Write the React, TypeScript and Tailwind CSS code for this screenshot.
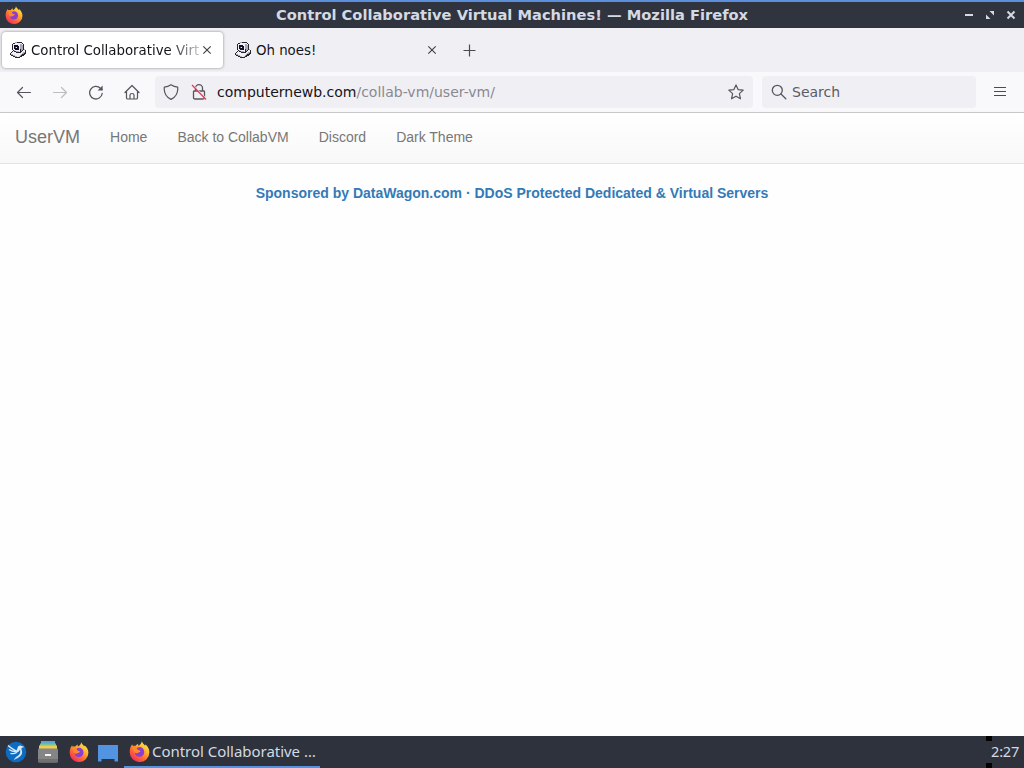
import React from 'react';

function FirefoxIcon({ id, size }: { id: string; size: number }) {
  return (
    <svg width={size} height={size} viewBox="0 0 20 20" className="shrink-0">
      <defs>
        <linearGradient id={id} x1="0.85" y1="0.05" x2="0.2" y2="0.95">
          <stop offset="0" stopColor="#fff04a" />
          <stop offset="0.35" stopColor="#ffb02e" />
          <stop offset="0.65" stopColor="#ff6a33" />
          <stop offset="1" stopColor="#ee2c5e" />
        </linearGradient>
      </defs>
      <path
        d="M12.2 0.3c.5 2 2.2 2.8 3.2 4.3.2-.5.1-1 0-1.4 2.4 1.5 4 4.600 4 7.500a9.300 9.200 0 0 1-18.700.2C.5 8 1.500 5 3.100 3.200c.1.700.3 1.100.7 1.600.8-.3 1.600-.4 2.500-.2C7 3.600 7.900 2.900 8.900 2.500c-.4.8-.4 1.500.1 2.100C10.500 3.700 12 2.500 12.200.3z"
        fill={`url(#${id})`}
      />
      <path d="M8 6.300c2.500-1.600 6.300.2 6.500 3.900.1 3-2.200 5-4.800 4.900-2.600-.1-4.300-2-4.200-4.300 1 .9 2.400.8 3.300.1.800-.6 1.500-.7 2-.9.100-.7-1.900-1-2.900-1.600-.5-.5-.5-1.400.1-2.100z" fill="#8a3fd0" />
      <path d="M3.600 5.200c1.700-.7 3.400-.3 4.300 1.100-.5.700-.3 1.700.4 2.200 1 .5 2.800.8 2.600 1.500-1 .2-1.400.5-2.200 1.100-1.300.9-3 .4-4-.900z" fill="#ff8a2b" />
    </svg>
  );
}

// Pixel art favicon, one character per pixel
const PIXELS = [
  '.....ggkkkkk....',
  '...kkwwwwwwwk...',
  '..kwwwwwwwggwk..',
  '..kwnnnnwwgggk..',
  '..kwnnnnnwgggk..',
  '..kwnbwnnwgggk..',
  '..kwnnnnnwgggk..',
  '..kwwnnnnwkggkg.',
  '...kgwwwwwkgkwwk',
  '..kwkkgggwkkwwwk',
  '.kwwwwkkkkkwwggk',
  'kwwwwwwwwwwwggkk',
  'kggwwwwwwwwgkkk.',
  '.kkggwwwwwgkkk..',
  '...kkggwwgkk....',
  '.....kkkkk......',
];

const PIXEL_COLORS: Record<string, string> = {
  k: '#24242e',
  w: '#f1f1f4',
  g: '#a9a9b4',
  n: '#10102c',
  b: '#5c5e88',
};

function ComputerIcon() {
  return (
    <svg width="16" height="16" viewBox="0 0 16 16" shapeRendering="crispEdges" className="shrink-0">
      {PIXELS.map((row, y) =>
        row.split('').map((c, x) =>
          c === '.' ? null : <rect key={`${x}-${y}`} x={x} y={y} width="1" height="1" fill={PIXEL_COLORS[c]} />
        )
      )}
    </svg>
  );
}

function CloseIcon() {
  return (
    <svg width="10" height="10" viewBox="0 0 10 10" fill="none" stroke="#3e3e45" strokeWidth="1.100" className="shrink-0">
      <path d="M1.300 1.300l7.400 7.400M8.700 1.300l-7.400 7.400" />
    </svg>
  );
}

function TitleBar() {
  return (
    <div className="flex h-7 items-center border-t-2 border-[#5b8fdc] bg-[#2f343f] pl-[5px] pr-2">
      <div className="w-[90px]">
        <FirefoxIcon id="fx-title" size={18} />
      </div>
      <div className="flex-1 whitespace-nowrap pb-px pl-[3px] text-center font-['DejaVu_Sans',sans-serif] text-[14.670px] leading-5 font-bold text-[#d3dae3]">
        Control Collaborative Virtual Machines! — Mozilla Firefox
      </div>
      <div className="flex w-[90px] items-center justify-end">
        <svg width="54" height="12" viewBox="0 0 54 12" fill="#d3dae3">
          <path d="M3 5h8v2H3z" />
          <path d="M27.500 2H32v4.500zM24 5.500L28.500 10H24z" />
          <path d="M45.500 2.500l7 7M52.500 2.500l-7 7" stroke="#d3dae3" strokeWidth="2" />
        </svg>
      </div>
    </div>
  );
}

function TabBar() {
  return (
    <div className="flex h-11 items-center bg-[#f0f0f4] pl-0.5 font-['DejaVu_Sans',sans-serif] text-[13.330px] text-[#15141a]">
      <div className="flex h-9 w-[221px] items-center rounded bg-white pl-2 pr-[11px] shadow-[0_0_3px_rgba(60,60,70,0.6)]">
        <ComputerIcon />
        <span className="ml-[5px] w-[169px] whitespace-nowrap pt-[2px] [mask-image:linear-gradient(to_right,black_138px,transparent_178px)]">
          Control Collaborative Virt
        </span>
        <span className="ml-[2px] flex">
          <CloseIcon />
        </span>
      </div>
      <div className="flex h-9 w-[225px] items-center pl-3 pr-[7px]">
        <ComputerIcon />
        <span className="ml-[5px] flex-1 pt-[2px]">Oh noes!</span>
        <span className="mr-[4px] flex">
          <CloseIcon />
        </span>
      </div>
      <svg width="14" height="14" viewBox="0 0 14 14" fill="none" stroke="#4a4a52" strokeWidth="1.200" className="ml-[14px]">
        <path d="M7.500 1.500v12M1.500 7.500h12" />
      </svg>
    </div>
  );
}

function Toolbar() {
  return (
    <div className="flex h-[41px] items-center border-b border-[#cccccf] bg-[#f9f9fb] font-['DejaVu_Sans',sans-serif] text-[14px]">
      <div className="flex w-[155px] items-center gap-5 pl-4">
        <svg width="16" height="16" viewBox="0 0 16 16" fill="none" stroke="#55555d" strokeWidth="1.200" strokeLinecap="round" strokeLinejoin="round">
          <path d="M14.500 8.500H1.500M6.500 3.500l-5 5 5 5" />
        </svg>
        <svg width="16" height="16" viewBox="0 0 16 16" fill="none" stroke="#bcbcc2" strokeWidth="1.200" strokeLinecap="round" strokeLinejoin="round">
          <path d="M1.500 8.500h13M9.500 3.500l5 5-5 5" />
        </svg>
        <svg width="16" height="16" viewBox="0 0 16 16" fill="none" stroke="#55555d" strokeWidth="1.300" strokeLinecap="round">
          <path d="M14.200 9.500A6.300 6.300 0 1 1 12.400 4.200L14 5.500" />
          <path d="M14.600 1.600v5H9.600z" fill="#55555d" stroke="none" />
        </svg>
        <svg width="16" height="16" viewBox="0 0 16 16" fill="none" stroke="#55555d" strokeWidth="1.200" strokeLinecap="round" strokeLinejoin="round">
          <path d="M1 8.500l7-7 7 7M2.500 7.500v6.200q0 1.300 1.300 1.300h8.400q1.300 0 1.300-1.300V7.500M6 15v-4q0-1.500 2-1.500t2 1.500v4" />
        </svg>
      </div>
      <div className="flex h-8 w-[598px] items-center rounded bg-[#f0f0f4] pl-2 pr-[9px]">
        <svg width="16" height="16" viewBox="0 0 16 16" fill="none" stroke="#55555d" strokeWidth="1.200" strokeLinejoin="round">
          <path d="M8 .8Q11 2.800 14.700 3.100C15.200 8.500 12.800 13 8 15.400 3.200 13 .8 8.500 1.300 3.100 5 2.800 8 .8 8 .8z" />
        </svg>
        <svg width="16" height="16" viewBox="0 0 16 16" fill="none" stroke="#55555d" strokeWidth="1.300" className="ml-3">
          <path d="M4.500 7V4.200a3.500 3.500 0 0 1 7 0V7M3.300 7h9.400q.8 0 .8.800v5.700q0 1.500-1.500 1.500H4q-1.500 0-1.500-1.500V7.800q0-.8.800-.8z" />
          <path d="M1.800 .8l13.500 14" stroke="#f0f0f4" strokeWidth="1.200" />
          <path d="M1 1l14 14.500" stroke="#df3b62" />
        </svg>
        <span className="ml-[10px] flex-1 whitespace-nowrap text-[#8a8991]">
          <span className="text-[#15141a]">computernewb.com</span>/collab-vm/user-vm/
        </span>
        <svg width="16" height="16" viewBox="0 0 16 16" fill="none" stroke="#55555d" strokeWidth="1.200" strokeLinejoin="round">
          <path d="M8 .9l2.100 4.700 5.100.5-3.800 3.500 1.100 5.200L8 12.200l-4.500 2.600 1.100-5.200L.8 6.100l5.100-.5z" />
        </svg>
      </div>
      <div className="ml-[9px] flex h-8 w-[214px] items-center rounded bg-[#f0f0f4] pl-[9px] text-[#5b5b66]">
        <svg width="16" height="16" viewBox="0 0 16 16" fill="none" stroke="#55555d" strokeWidth="1.300" strokeLinecap="round">
          <circle cx="6.300" cy="6.300" r="5" />
          <path d="M10 10l4.800 4.800" />
        </svg>
        <span className="ml-[5px]">Search</span>
      </div>
      <svg width="12" height="11" viewBox="0 0 12 11" fill="none" stroke="#4a4a52" strokeWidth="1.200" className="mb-px ml-[18px]">
        <path d="M0 1.500h12M0 5.500h12M0 9.500h12" />
      </svg>
    </div>
  );
}

function SiteNav() {
  return (
    <nav className="flex h-[51px] items-center border-b border-[#e2e2e2] bg-linear-to-b from-white to-[#f8f8f8] pl-[15px] pb-[2px] font-['Liberation_Sans',Arial,sans-serif] text-[14px] text-[#777777] shadow-[0_1px_4px_rgba(0,0,0,0.075)]">
      <a className="mr-[30px] text-[18px]">UserVM</a>
      <div className="flex gap-[30px]">
        <a>Home</a>
        <a>Back to CollabVM</a>
        <a>Discord</a>
        <a>Dark Theme</a>
      </div>
    </nav>
  );
}

function LubuntuIcon() {
  return (
    <svg width="22" height="22" viewBox="0 0 22 22">
      <circle cx="11" cy="11" r="10.300" fill="#0e6bc0" />
      <path d="M3 4.500q3.500 3 8 5.500" stroke="#d7eafa" strokeWidth="1.600" fill="none" />
      <path d="M4 8.500q3 2.200 7 2.300" stroke="#d7eafa" strokeWidth="1.400" fill="none" />
      <path d="M5.500 12.300q3 1 6.300-.8" stroke="#d7eafa" strokeWidth="1.300" fill="none" />
      <path d="M19.500 6l-2.600-.9c-2-1.300-4.100-.4-4.400 1.800-.2 1.600-1.200 2.500-2.200 3.300l1.200 1.600c1.600-.4 2.700-1.500 3.400-3 .9 2.300.4 4.500-2.300 6.200-1.600 1-3.200 2-3.500 4.200 1.200-1.300 2.400-1.800 3.700-2.300 4-1.600 5.200-4.900 3.700-8.300-.2-.7-.1-1.300.3-1.900z" fill="#d7eafa" />
    </svg>
  );
}

function Taskbar() {
  return (
    <div className="flex h-8 items-center bg-[#2d323d] pl-[5px] font-['Noto_Sans',sans-serif] text-[#d3dae3]">
      <LubuntuIcon />
      <svg width="20" height="22" viewBox="0 0 20 22" className="ml-[11px]">
        <path d="M3 0h14v4H3z" fill="#5ba7d2" />
        <path d="M2 2.500h16V6H2z" fill="#79c58c" />
        <path d="M1 4.500h18V9H1z" fill="#f0cb58" />
        <path d="M1 7.500h18q1 0 1 1V20q0 1.500-1.500 1.500h-17Q0 21.500 0 20V8.500q0-1 1-1z" fill="#858585" />
        <path d="M0 18h20v2q0 1.500-1.500 1.500h-17Q0 21.500 0 20z" fill="#707070" />
        <path d="M7 13h6v2H7z" fill="#f5f5f5" />
      </svg>
      <span className="ml-[11px] flex">
        <FirefoxIcon id="fx-launch" size={20} />
      </span>
      <svg width="20" height="17" viewBox="0 0 20 17" className="ml-[9px] mt-[2px]">
        <path d="M0 0h20v16.500h-3.500V14h-13v2.500H0z" fill="#5294e2" />
      </svg>
      <div className="ml-[6px] flex h-full w-[196px] items-center border-b-2 border-[#5294e2] pl-[5px]">
        <FirefoxIcon id="fx-task" size={21} />
        <span className="ml-[2px] whitespace-nowrap text-[15px] tracking-[-0.03px]">Control Collaborative …</span>
      </div>
      <div className="ml-auto flex h-full items-center">
        <div className="flex h-full w-[6px] flex-col justify-between">
          <div className="h-[5px] bg-black" />
          <div className="h-[5px] bg-black" />
        </div>
        <span className="w-8 pr-[5px] text-right text-[14.500px] tracking-[-0.2px]">
          <span className="-ml-1">2:27</span>
        </span>
      </div>
    </div>
  );
}

export default function App() {
  return (
    <div className="flex h-screen w-full flex-col overflow-hidden bg-white">
      <TitleBar />
      <TabBar />
      <Toolbar />
      <SiteNav />
      <main className="flex-1 bg-[#fefefe] pt-[19px] text-center font-['Liberation_Sans',Arial,sans-serif] text-[14px] leading-5">
        <a className="font-bold text-[#337ab7]">Sponsored by DataWagon.com · DDoS Protected Dedicated &amp; Virtual Servers</a>
      </main>
      <Taskbar />
    </div>
  );
}
